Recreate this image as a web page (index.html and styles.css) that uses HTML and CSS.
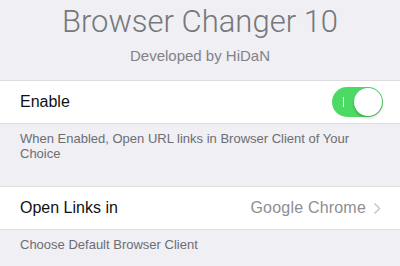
FILE: index.html
```html
<!DOCTYPE html>
<html lang="en">
<head>
  <meta charset="UTF-8" />
  <meta name="viewport" content="width=device-width, initial-scale=1" />
  <title>Browser Changer 10</title>
  <link rel="stylesheet" href="styles.css">
</head>
<body>

  <div class="header">
    <h1 class="title">Browser Changer 10</h1>
    <div class="subtitle">Developed by HiDaN</div>
  </div>

  <div class="group">
    <div class="row">
      <span class="row-label">Enable</span>
      <div class="switch on">
        <span class="switch-mark"></span>
        <span class="knob"></span>
      </div>
    </div>
  </div>
  <div class="group-footer">When Enabled, Open URL links in Browser Client of Your Choice</div>

  <div class="group">
    <div class="row">
      <span class="row-label">Open Links in</span>
      <span class="row-value">
        Google Chrome
        <svg class="chevron" width="8" height="13" viewBox="0 0 8 13">
          <polyline points="1.5,1.5 6.5,6.5 1.5,11.5" fill="none" stroke="#c7c7cc" stroke-width="1.5" />
        </svg>
      </span>
    </div>
  </div>
  <div class="group-footer">Choose Default Browser Client</div>

</body>
</html>
```

FILE: styles.css
```css
body {
  font-family: 'Liberation Sans', Arial, sans-serif;
  background: #efeff4;
  margin: 0;
  padding: 0;
  overflow: hidden;
}

.header {
  text-align: center;
  padding-top: 4px;
  margin-bottom: 15px;
}

.title {
  margin: 0;
  font-family: Roboto, 'Liberation Sans', sans-serif;
  font-size: 31px;
  line-height: 36px;
  font-weight: 300;
  color: #77777a;
}

.subtitle {
  margin-top: 7px;
  font-size: 15px;
  line-height: 18px;
  color: #828286;
}

.group {
  background: #fff;
  border-top: 1px solid #dcdce1;
  border-bottom: 1px solid #dcdce1;
}

.row {
  height: 42px;
  display: flex;
  align-items: center;
  justify-content: space-between;
  padding: 0 17px 0 20px;
}

.row-label {
  font-size: 16px;
  color: #111;
}

.row-value {
  display: flex;
  align-items: center;
  gap: 7px;
  padding-right: 2px;
  font-size: 16px;
  letter-spacing: 0.2px;
  color: #8e8e93;
}

.switch {
  position: relative;
  width: 51px;
  height: 30px;
  border-radius: 15px;
  background: #4cd964;
}

.switch-mark {
  position: absolute;
  left: 11px;
  top: 10px;
  width: 1px;
  height: 10px;
  background: #e6f9ea;
}

.knob {
  position: absolute;
  right: 1px;
  top: 1px;
  width: 28px;
  height: 28px;
  border-radius: 50%;
  background: #fff;
  box-shadow: 0 2px 3px rgba(0, 0, 0, 0.2), 0 0 0 0.5px rgba(0, 0, 0, 0.08);
}

.group-footer {
  padding: 7px 20px 25px;
  font-size: 13px;
  line-height: 15px;
  color: #6d6d72;
}
```
